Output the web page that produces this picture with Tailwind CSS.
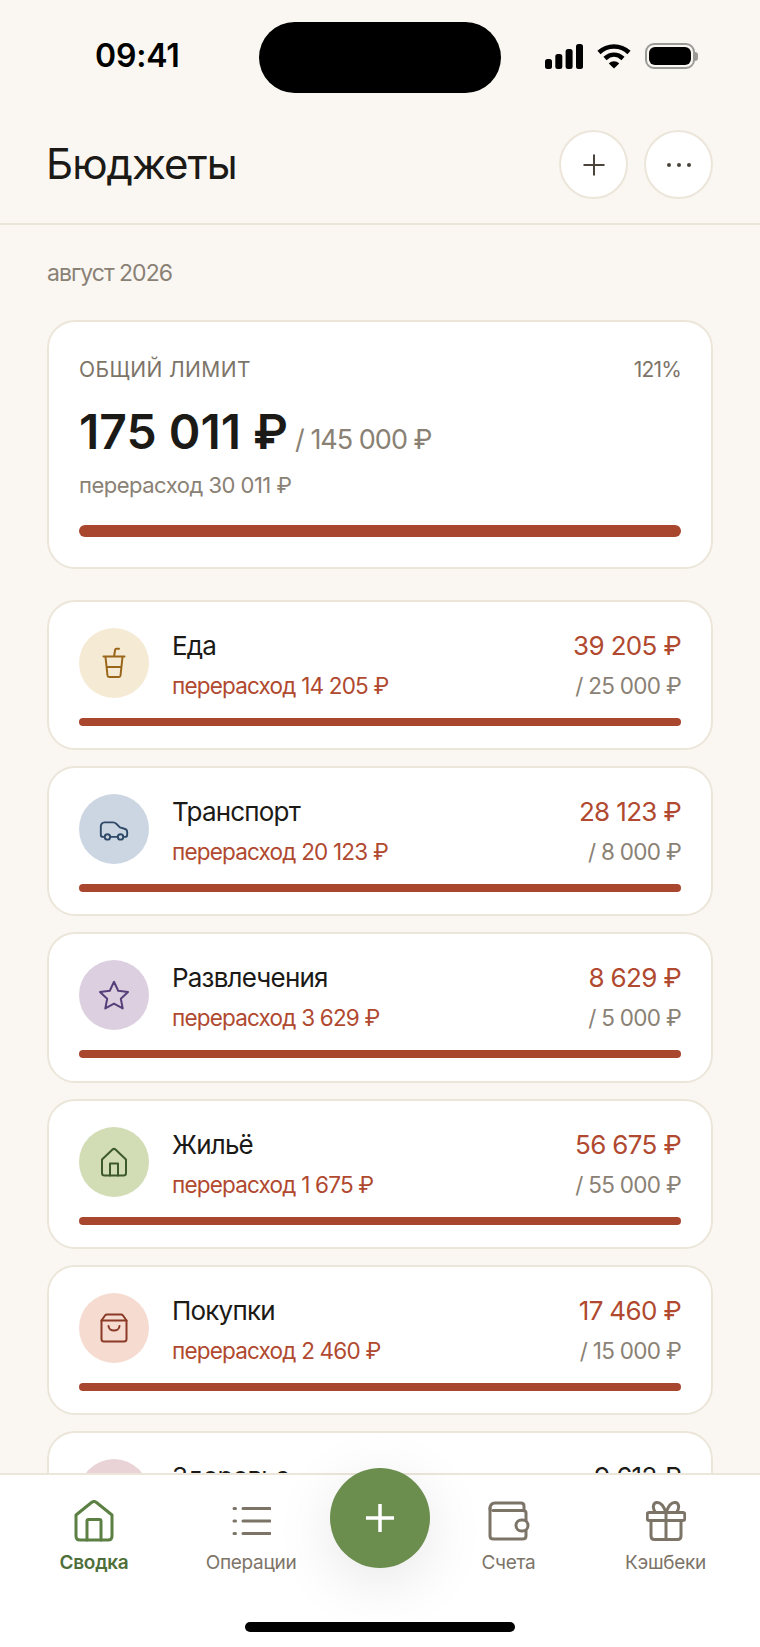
<!DOCTYPE html>
<html lang="ru">
<head>
    <meta charset="UTF-8">
    <meta name="viewport" content="width=device-width, initial-scale=1.0">
    <title>Бюджеты</title>
    <script src="https://cdn.jsdelivr.net/npm/@tailwindcss/browser@4"></script>
</head>
<body class="bg-[#faf7f2]">
<div class="relative w-[760px] h-[1647px] overflow-hidden flex flex-col bg-[#faf7f2] text-[#1c1a17] font-['Inter','Noto_Sans',sans-serif]">

    <!-- Status bar -->
    <div class="h-[130px] shrink-0 relative">
        <div class="absolute left-[95px] top-[39px] text-[32px] leading-[34px] font-semibold text-black tracking-[-0.2px]">09:41</div>
        <div class="absolute left-[259px] top-[22px] w-[242px] h-[71px] rounded-full bg-black"></div>
        <div class="absolute left-[545px] top-[43px] flex items-center gap-[14px]">
            <svg width="38" height="26" viewBox="0 0 38 26" fill="#000">
                <rect x="0" y="16" width="7" height="10" rx="2.5"/>
                <rect x="10.3" y="11" width="7" height="15" rx="2.5"/>
                <rect x="20.6" y="6" width="7" height="20" rx="2.5"/>
                <rect x="31" y="1" width="7" height="25" rx="2.5"/>
            </svg>
            <svg width="34" height="26" viewBox="0 0 34 26" fill="none" stroke="#000" stroke-width="4.6">
                <path d="M2 9.5C10.500 1.500 23.500 1.500 32 9.500"/>
                <path d="M8 15.500C13.500 10.500 20.500 10.500 26 15.500"/>
                <path d="M17 25.500L11.800 20.400C14.800 17.600 19.200 17.600 22.200 20.400Z" fill="#000" stroke="none"/>
            </svg>
            <div class="flex items-center">
                <div class="w-[50px] h-[26px] rounded-[9px] border-2 border-[#9a9a96] p-[2px]">
                    <div class="w-full h-full rounded-[6px] bg-black"></div>
                </div>
                <div class="w-[3px] h-[9px] rounded-r-full bg-[#9a9a96]"></div>
            </div>
        </div>
    </div>

    <!-- Header -->
    <div class="h-[95px] shrink-0 border-b-2 border-[#ece6da] px-[47px] flex justify-between items-start">
        <h1 class="-ml-[1px] mt-[9px] text-[42px] leading-[50px] font-normal tracking-[-1px]">Бюджеты</h1>
        <div class="flex gap-[16px]">
            <button class="w-[69px] h-[69px] rounded-full bg-white border-2 border-[#ece6da] flex items-center justify-center">
                <svg width="22" height="22" viewBox="0 0 22 22" stroke="#4a443c" stroke-width="2" fill="none"><path d="M0.500 11H21.500M11 0.500V21.500"/></svg>
            </button>
            <button class="w-[69px] h-[69px] rounded-full bg-white border-2 border-[#ece6da] flex items-center justify-center gap-[6px]">
                <span class="w-[4px] h-[4px] rounded-full bg-[#4a443c]"></span>
                <span class="w-[4px] h-[4px] rounded-full bg-[#4a443c]"></span>
                <span class="w-[4px] h-[4px] rounded-full bg-[#4a443c]"></span>
            </button>
        </div>
    </div>

    <!-- Scroll content -->
    <div class="flex-1 min-h-0 overflow-hidden px-[47px] pt-[34px]">
        <div class="text-[23px] leading-[28px] text-[#8a8175] tracking-[-1px]">август 2026</div>

        <div class="mt-[33px] h-[249px] rounded-[28px] bg-white border-2 border-[#ece6da] px-[30px] pt-[35px]">
            <div class="flex justify-between text-[21px] leading-[26px] text-[#7d7468]">
                <span class="tracking-[0.4px]">ОБЩИЙ ЛИМИТ</span>
                <span class="tracking-[-0.8px]">121%</span>
            </div>
            <div class="mt-[21px] flex items-baseline gap-[7px]">
                <span class="text-[48px] leading-[56px] font-semibold">175 011 ₽</span>
                <span class="text-[27px] text-[#8a8175] tracking-[-1px]">/ 145 000 ₽</span>
            </div>
            <div class="mt-[10px] text-[22px] leading-[28px] text-[#8a8175] tracking-[-0.5px]">перерасход 30 011 ₽</div>
            <div class="mt-[26px] h-[12px] rounded-full bg-[#a8472e]"></div>
        </div>

        <div class="mt-[31px] flex flex-col gap-[16px]">
            <!-- Еда -->
            <div class="h-[150.2px] rounded-[28px] bg-white border-2 border-[#ece6da] px-[30px] pt-[26px]">
                <div class="flex items-start">
                    <div class="w-[70px] h-[70px] rounded-full bg-[#f5ead4] flex items-center justify-center shrink-0">
                        <svg width="24" height="34" viewBox="0 0 24 34" fill="none" stroke="#99661a" stroke-width="2" stroke-linecap="round" stroke-linejoin="round"><path d="M1.500 10.500H22.500M3.500 11L5.500 29.500C5.600 30.500 6.300 31 7 31H17C17.700 31 18.400 30.500 18.500 29.500L20.500 11M4.500 21H19.500M12 10.500L13.200 3.500C13.300 3 13.700 2.700 14.200 2.700H17"/></svg>
                    </div>
                    <div class="ml-[23px] mt-[2px] flex-1 min-w-0">
                        <div class="text-[26px] leading-[32px] tracking-[-0.8px]">Еда</div>
                        <div class="mt-[10px] text-[22.5px] leading-[28px] text-[#b0492f] tracking-[-0.8px]">перерасход 14 205 ₽</div>
                    </div>
                    <div class="mt-[2px] text-right">
                        <div class="text-[26px] leading-[32px] text-[#b0492f] tracking-[-0.65px]">39 205 ₽</div>
                        <div class="mt-[10px] text-[22.5px] leading-[28px] text-[#8a8175] tracking-[-0.7px]">/ 25 000 ₽</div>
                    </div>
                </div>
                <div class="mt-[18px] h-[8px] rounded-full bg-[#a8472e]"></div>
            </div>
            <!-- Транспорт -->
            <div class="h-[150.2px] rounded-[28px] bg-white border-2 border-[#ece6da] px-[30px] pt-[26px]">
                <div class="flex items-start">
                    <div class="w-[70px] h-[70px] rounded-full bg-[#ccd6e3] flex items-center justify-center shrink-0">
                        <svg class="mt-[3px]" width="30" height="20" viewBox="0 0 32 22" fill="none" stroke="#2f4a68" stroke-width="2.100" stroke-linecap="round" stroke-linejoin="round"><path d="M5.500 17.500H4C2.500 17.500 1.500 16.500 1.500 15V6C1.500 3.500 3 1.500 5.500 1.500H15C16.500 1.500 17.500 2 18.500 3L22.500 7L27.500 8.500C29.500 9 30.500 10.500 30.500 12V15C30.500 16.500 29.500 17.500 28 17.500H26.500M12 17.500H20"/><circle cx="8.800" cy="17.500" r="3"/><circle cx="23.200" cy="17.500" r="3"/></svg>
                    </div>
                    <div class="ml-[23px] mt-[2px] flex-1 min-w-0">
                        <div class="text-[26px] leading-[32px] tracking-[-0.8px]">Транспорт</div>
                        <div class="mt-[10px] text-[22.5px] leading-[28px] text-[#b0492f] tracking-[-0.8px]">перерасход 20 123 ₽</div>
                    </div>
                    <div class="mt-[2px] text-right">
                        <div class="text-[26px] leading-[32px] text-[#b0492f] tracking-[-0.65px]">28 123 ₽</div>
                        <div class="mt-[10px] text-[22.5px] leading-[28px] text-[#8a8175] tracking-[-0.7px]">/ 8 000 ₽</div>
                    </div>
                </div>
                <div class="mt-[18px] h-[8px] rounded-full bg-[#a8472e]"></div>
            </div>
            <!-- Развлечения -->
            <div class="h-[150.2px] rounded-[28px] bg-white border-2 border-[#ece6da] px-[30px] pt-[26px]">
                <div class="flex items-start">
                    <div class="w-[70px] h-[70px] rounded-full bg-[#dcd0e0] flex items-center justify-center shrink-0">
                        <svg width="32" height="30" viewBox="0 0 32 30" fill="none" stroke="#57407a" stroke-width="2" stroke-linejoin="round"><path d="M16 1.800L20.200 10.700L30 12L22.800 18.700L24.700 28.400L16 23.600L7.300 28.400L9.200 18.700L2 12L11.800 10.700Z"/></svg>
                    </div>
                    <div class="ml-[23px] mt-[2px] flex-1 min-w-0">
                        <div class="text-[26px] leading-[32px] tracking-[-0.8px]">Развлечения</div>
                        <div class="mt-[10px] text-[22.5px] leading-[28px] text-[#b0492f] tracking-[-0.8px]">перерасход 3 629 ₽</div>
                    </div>
                    <div class="mt-[2px] text-right">
                        <div class="text-[26px] leading-[32px] text-[#b0492f] tracking-[-0.65px]">8 629 ₽</div>
                        <div class="mt-[10px] text-[22.5px] leading-[28px] text-[#8a8175] tracking-[-0.7px]">/ 5 000 ₽</div>
                    </div>
                </div>
                <div class="mt-[18px] h-[8px] rounded-full bg-[#a8472e]"></div>
            </div>
            <!-- Жильё -->
            <div class="h-[150.2px] rounded-[28px] bg-white border-2 border-[#ece6da] px-[30px] pt-[26px]">
                <div class="flex items-start">
                    <div class="w-[70px] h-[70px] rounded-full bg-[#d2dcb5] flex items-center justify-center shrink-0">
                        <svg width="28" height="30" viewBox="0 0 28 30" fill="none" stroke="#3d5a2c" stroke-width="2" stroke-linecap="round" stroke-linejoin="round"><path d="M2 12.500L12.500 2.500C13.400 1.700 14.600 1.700 15.500 2.500L26 12.500V26C26 27.500 25 28.500 23.500 28.500H4.500C3 28.500 2 27.500 2 26Z"/><path d="M10 28.500V16.500H18V28.500"/></svg>
                    </div>
                    <div class="ml-[23px] mt-[2px] flex-1 min-w-0">
                        <div class="text-[26px] leading-[32px] tracking-[-0.8px]">Жильё</div>
                        <div class="mt-[10px] text-[22.5px] leading-[28px] text-[#b0492f] tracking-[-0.8px]">перерасход 1 675 ₽</div>
                    </div>
                    <div class="mt-[2px] text-right">
                        <div class="text-[26px] leading-[32px] text-[#b0492f] tracking-[-0.65px]">56 675 ₽</div>
                        <div class="mt-[10px] text-[22.5px] leading-[28px] text-[#8a8175] tracking-[-0.7px]">/ 55 000 ₽</div>
                    </div>
                </div>
                <div class="mt-[18px] h-[8px] rounded-full bg-[#a8472e]"></div>
            </div>
            <!-- Покупки -->
            <div class="h-[150.2px] rounded-[28px] bg-white border-2 border-[#ece6da] px-[30px] pt-[26px]">
                <div class="flex items-start">
                    <div class="w-[70px] h-[70px] rounded-full bg-[#f6dbd0] flex items-center justify-center shrink-0">
                        <svg width="28" height="30" viewBox="0 0 28 30" fill="none" stroke="#8a3a26" stroke-width="2" stroke-linecap="round" stroke-linejoin="round"><path d="M1.500 7.500L5 2.500C5.500 1.800 6 1.500 7 1.500H21C22 1.500 22.500 1.800 23 2.500L26.500 7.500V26C26.500 27.500 25.500 28.500 24 28.500H4C2.500 28.500 1.500 27.500 1.500 26Z"/><path d="M1.500 7.500H26.500M8.500 13C8.800 19 19.200 19 19.500 13"/></svg>
                    </div>
                    <div class="ml-[23px] mt-[2px] flex-1 min-w-0">
                        <div class="text-[26px] leading-[32px] tracking-[-0.8px]">Покупки</div>
                        <div class="mt-[10px] text-[22.5px] leading-[28px] text-[#b0492f] tracking-[-0.8px]">перерасход 2 460 ₽</div>
                    </div>
                    <div class="mt-[2px] text-right">
                        <div class="text-[26px] leading-[32px] text-[#b0492f] tracking-[-0.65px]">17 460 ₽</div>
                        <div class="mt-[10px] text-[22.5px] leading-[28px] text-[#8a8175] tracking-[-0.7px]">/ 15 000 ₽</div>
                    </div>
                </div>
                <div class="mt-[18px] h-[8px] rounded-full bg-[#a8472e]"></div>
            </div>
            <!-- Здоровье (cut off by the tab bar) -->
            <div class="h-[150.2px] rounded-[28px] bg-white border-2 border-[#ece6da] px-[30px] pt-[26px]">
                <div class="flex items-start">
                    <div class="w-[70px] h-[70px] rounded-full bg-[#ead3d6] shrink-0"></div>
                    <div class="ml-[23px] mt-[2px] flex-1 min-w-0">
                        <div class="text-[26px] leading-[32px] tracking-[-0.8px]">Здоровье</div>
                    </div>
                    <div class="mt-[2px] text-right">
                        <div class="text-[26px] leading-[32px] tracking-[-0.65px]">9 612 ₽</div>
                    </div>
                </div>
            </div>
        </div>
    </div>

    <!-- Tab bar -->
    <div class="relative h-[174px] shrink-0 bg-white border-t-2 border-[#ece6da]">
        <div class="grid grid-cols-[188px_126px_132px_125px_1fr] pt-[25px] text-[19px] leading-[26px] tracking-[-0.3px] text-[#7d7468]">
            <div class="flex flex-col items-center text-[#4f6f3a]">
                <svg width="40" height="42" viewBox="0 0 40 42" fill="none" stroke="#5c8043" stroke-width="3" stroke-linejoin="round" stroke-linecap="round"><path d="M2 15L17.500 2.500C19 1.300 21 1.300 22.500 2.500L38 15V36C38 38.500 36.500 40 34 40H6C3.500 40 2 38.500 2 36Z"/><path d="M13 40V21C13 20 13.700 19.500 14.500 19.500H25.500C26.300 19.500 27 20 27 21V40"/></svg>
                <span class="mt-[8px] font-semibold">Сводка</span>
            </div>
            <div class="flex flex-col items-center">
                <svg width="40" height="42" viewBox="0 0 40 42" fill="none" stroke="#7d7468" stroke-width="3" stroke-linecap="round"><path d="M3 8.500H4.500M3 21H4.500M3 33.500H4.500"/><path d="M12 8.500H39M12 21H39M12 33.500H39"/></svg>
                <span class="mt-[8px]">Операции</span>
            </div>
            <div></div>
            <div class="flex flex-col items-center">
                <svg width="42" height="42" viewBox="0 0 42 42" fill="none" stroke="#7d7468" stroke-width="3" stroke-linecap="round" stroke-linejoin="round"><path d="M2 9C2 5 4 3 7 3H33C35 3 36 4.500 36 6V10"/><path d="M5 10.500H35C37 10.500 38 11.500 38 13V20M38 31V36C38 38 36.500 39 34.500 39H5.500C3.500 39 2 38 2 36V8"/><rect x="28" y="20" width="12" height="11" rx="5.500"/></svg>
                <span class="mt-[8px]">Счета</span>
            </div>
            <div class="flex flex-col items-center">
                <svg width="40" height="42" viewBox="0 0 40 42" fill="none" stroke="#7d7468" stroke-width="3" stroke-linecap="round" stroke-linejoin="round"><path d="M3 12.500H37C38.200 12.500 38.800 13.300 38.800 14.500V18.500C38.800 19.700 38.200 20.500 37 20.500H3C1.800 20.500 1.200 19.700 1.200 18.500V14.500C1.200 13.300 1.800 12.500 3 12.500Z"/><path d="M5 20.500V36C5 38.500 6.500 39.500 8.500 39.500H31.500C33.500 39.500 35 38.500 35 36V20.500M20 12.500V39.500"/><path d="M20 12.500C17 4 13.500 2 10.500 2.500C6.500 3.200 6.500 9 9.500 12.500M20 12.500C23 4 26.500 2 29.500 2.500C33.500 3.200 33.500 9 30.500 12.500"/></svg>
                <span class="mt-[8px]">Кэшбеки</span>
            </div>
        </div>
        <!-- Home indicator -->
        <div class="absolute left-[245px] top-[147px] w-[270px] h-[10px] rounded-full bg-black"></div>
    </div>

    <!-- FAB -->
    <button class="absolute left-[330px] top-[1468px] w-[100px] h-[100px] rounded-full bg-[#6b8e4e] shadow-[0_14px_60px_rgba(0,0,0,0.10)] flex items-center justify-center">
        <svg width="30" height="30" viewBox="0 0 30 30" stroke="#fff" stroke-width="3.500" fill="none"><path d="M1 15H29M15 1V29"/></svg>
    </button>
</div>
</body>
</html>
